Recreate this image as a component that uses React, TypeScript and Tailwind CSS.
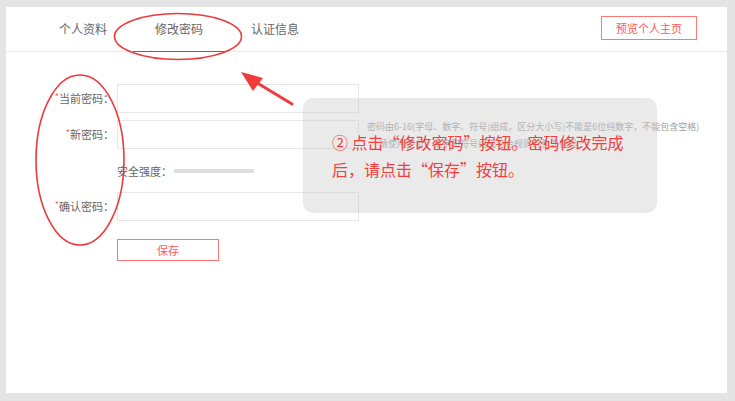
const font = { fontFamily: '"Microsoft YaHei", "Noto Sans CJK SC", "Noto Sans", sans-serif' };

const tabs = ["个人资料", "修改密码", "认证信息"];

function Field({ label, children }: { label: string; children?: React.ReactNode }) {
  return (
    <div className="flex items-center h-[29px]">
      <div className="w-[108px] text-right text-[11px] text-[#666]">
        <span className="text-[#f55] text-[9px] align-top">*</span>
        {label}：
      </div>
      <div className="ml-[3px] w-[242px] h-[29px] border border-[#e6e6e6]"></div>
      {children}
    </div>
  );
}

const App = () => {
  return (
    <div
      className="relative w-[735px] h-[401px] bg-[#e4e4e4] pt-[7px] pl-[6px] pr-[8px] pb-[8px] overflow-hidden"
      style={font}
    >
      <div className="bg-white h-full flex flex-col">
        {/* header tabs */}
        <div className="h-[45px] border-b border-[#e8e8e8] flex items-center justify-between pl-[31px] pr-[30px]">
          <div className="flex h-full gap-[4px]">
            {tabs.map((t, i) => (
              <div
                key={t}
                className="relative w-[92px] h-full flex items-center justify-center text-[12px] text-[#666]"
              >
                {t}
                {i === 1 && <span className="absolute left-0 right-0 bottom-[-1px] h-[1.5px] bg-[#666]"></span>}
              </div>
            ))}
          </div>
          <button className="w-[96px] h-[24px] border border-[#f77] text-[11px] text-[#f55] flex items-center justify-center -mt-[2px]">
            预览个人主页
          </button>
        </div>

        {/* form */}
        <div className="flex flex-col pt-[32px]">
          <Field label="当前密码" />
          <div className="mt-[7px]">
            <Field label="新密码">
              <div className="ml-[8px] text-[9px] leading-[17px] text-[#a0a0a0] whitespace-nowrap">
                <div>密码由6-16(字母、数字、符号)组成，区分大小写(不能是6位纯数字，不能包含空格)</div>
                <div className="pl-[12px]">请使用字母、数字和符号组成符合规则的包含密码</div>
              </div>
            </Field>
          </div>
          <div className="mt-[11px] h-[22px] flex items-center pl-[111px]">
            <span className="text-[11px] text-[#666]">安全强度：</span>
            <span className="ml-[2px] w-[80px] h-[4px] bg-[#dedede]"></span>
          </div>
          <div className="mt-[10px]">
            <Field label="确认密码" />
          </div>
          <div className="mt-[18px] pl-[111px]">
            <button className="w-[102px] h-[22px] border border-[#f77] text-[11px] text-[#f55] flex items-center justify-center">
              保存
            </button>
          </div>
        </div>
      </div>

      {/* tip overlay */}
      <div className="absolute left-[303px] top-[98px] w-[354px] h-[115px] rounded-[10px] bg-[rgba(205,205,205,0.42)] flex items-center pl-[29px]">
        <div className="text-[16px] leading-[27px] text-[#f43d3d] whitespace-nowrap">
          ② 点击“修改密码”按钮。密码修改完成
          <br />
          后，请点击“保存”按钮。
        </div>
      </div>

      {/* annotations */}
      <svg className="absolute inset-0 pointer-events-none" width="735" height="401">
        <ellipse cx="178" cy="36.5" rx="63.5" ry="23" fill="none" stroke="#ee3a3a" strokeWidth="1.6" />
        <ellipse cx="80" cy="160" rx="44" ry="85" fill="none" stroke="#ee3a3a" strokeWidth="1.6" />
        <line x1="292" y1="104" x2="254" y2="81" stroke="#f03c3c" strokeWidth="3" strokeLinecap="round" />
        <polygon points="241,72 263,78 253,91" fill="#f03c3c" />
      </svg>
    </div>
  );
};

export default App;
